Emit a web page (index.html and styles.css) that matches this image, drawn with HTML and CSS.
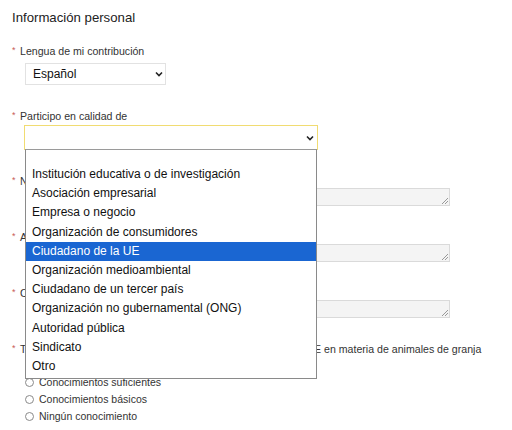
FILE: index.html
```html
<!DOCTYPE html>
<html lang="es">
<head>
<meta charset="utf-8">
<link rel="stylesheet" href="styles.css">
</head>
<body>
<div class="page">
  <h2 class="title">Información personal</h2>

  <div class="field">
    <div class="label"><span class="req">*</span>Lengua de mi contribución</div>
    <div class="select small"><span class="val">Español</span><svg class="chev" width="8" height="6" viewBox="0 0 8 6"><path d="M1 1.5 L4 4.5 L7 1.5" fill="none" stroke="#222" stroke-width="1.6"/></svg></div>
  </div>

  <div class="field">
    <div class="label"><span class="req">*</span>Participo en calidad de</div>
    <div class="dd-wrap">
      <div class="select wide focus"><span class="val"></span><svg class="chev" width="8" height="6" viewBox="0 0 8 6"><path d="M1 1.5 L4 4.5 L7 1.5" fill="none" stroke="#222" stroke-width="1.6"/></svg></div>
      <ul class="dropdown">
        <li class="blank"></li>
        <li>Institución educativa o de investigación</li>
        <li>Asociación empresarial</li>
        <li>Empresa o negocio</li>
        <li>Organización de consumidores</li>
        <li class="sel">Ciudadano de la UE</li>
        <li>Organización medioambiental</li>
        <li>Ciudadano de un tercer país</li>
        <li>Organización no gubernamental (ONG)</li>
        <li>Autoridad pública</li>
        <li>Sindicato</li>
        <li>Otro</li>
      </ul>
    </div>
  </div>

  <div class="field">
    <div class="label"><span class="req">*</span>Nombre</div>
    <div class="textarea"><span class="grip"></span></div>
  </div>

  <div class="field">
    <div class="label"><span class="req">*</span>Apellidos</div>
    <div class="textarea"><span class="grip"></span></div>
  </div>

  <div class="field">
    <div class="label"><span class="req">*</span>Correo electrónico</div>
    <div class="textarea"><span class="grip"></span></div>
  </div>

  <div class="field last">
    <div class="label"><span class="req">*</span>Tu grado de conocimientos sobre la legislación vigente de la UE en materia de animales de granja</div>
    <ul class="radios">
      <li><span class="radio"></span>Conocimientos avanzados</li>
      <li><span class="radio"></span>Conocimientos suficientes</li>
      <li><span class="radio"></span>Conocimientos básicos</li>
      <li><span class="radio"></span>Ningún conocimiento</li>
    </ul>
  </div>
</div>
</body>
</html>
```

FILE: styles.css
```css
* { box-sizing: border-box; }
html, body { margin: 0; padding: 0; background: #fff; }
body {
  font-family: "Liberation Sans", Arial, sans-serif;
  color: #222;
  width: 512px;
  height: 430px;
  overflow: hidden;
}
.page { padding: 9px 0 0 12px; }
.title {
  font-size: 13.2px;
  font-weight: normal;
  margin: 0 0 18px 0;
  line-height: 18px;
  color: #222;
}
.field { margin-bottom: 25px; }
.label {
  font-size: 10.6px;
  line-height: 13px;
  height: 13px;
  color: #333;
  white-space: nowrap;
  display: flex;
  align-items: flex-start;
}
.req {
  color: #c95a58;
  font-size: 9px;
  width: 8px;
  line-height: 11px;
}
.select {
  margin: 5px 0 0 13px;
  border: 1px solid #e2e2e2;
  background: #fff;
  display: flex;
  align-items: center;
  justify-content: space-between;
  padding: 0 2px 0 7px;
  font-size: 12px;
  color: #111;
}
.select.small { width: 141px; height: 22px; }
.dd-wrap { position: relative; padding-top: 2px; }
.select.wide { width: 294px; height: 25px; margin: 0 0 0 12px; padding-right: 3px; }
.select.focus { border: 1.5px solid #f1dc72; }
.chev { display: block; }
.dropdown {
  position: absolute;
  left: 13px;
  top: 26px;
  width: 292px;
  margin: 0;
  padding: 0 0 2px 0;
  list-style: none;
  background: #fff;
  border: 1px solid #8a8a8a;
  border-top-color: #9a9a9a;
  z-index: 5;
}
.dropdown li {
  font-size: 12px;
  height: 19.2px;
  line-height: 19px;
  padding-left: 6px;
  color: #111;
  white-space: nowrap;
}
.dropdown li.blank { height: 15px; }
.dropdown li.sel { background: #1a66d2; color: #fff; }
.textarea {
  position: relative;
  margin: 0 0 0 13px;
  width: 425px;
  height: 18px;
  background: #f4f4f4;
  border: 1px solid #dadada;
}
.grip {
  position: absolute;
  right: 1px;
  bottom: 1px;
  width: 6px;
  height: 6px;
  background: linear-gradient(135deg, transparent 45%, #999 45%, #999 55%, transparent 55%, transparent 70%, #999 70%, #999 80%, transparent 80%);
}
.radios {
  list-style: none;
  margin: 1px 0 0 13px;
  padding: 0;
}
.radios li {
  font-size: 10.5px;
  line-height: 17px;
  height: 17px;
  color: #333;
  display: flex;
  align-items: center;
}
.radio {
  width: 9px;
  height: 9px;
  border: 1px solid #8a8a8a;
  border-radius: 50%;
  margin-right: 5px;
  background: #fff;
}
```
